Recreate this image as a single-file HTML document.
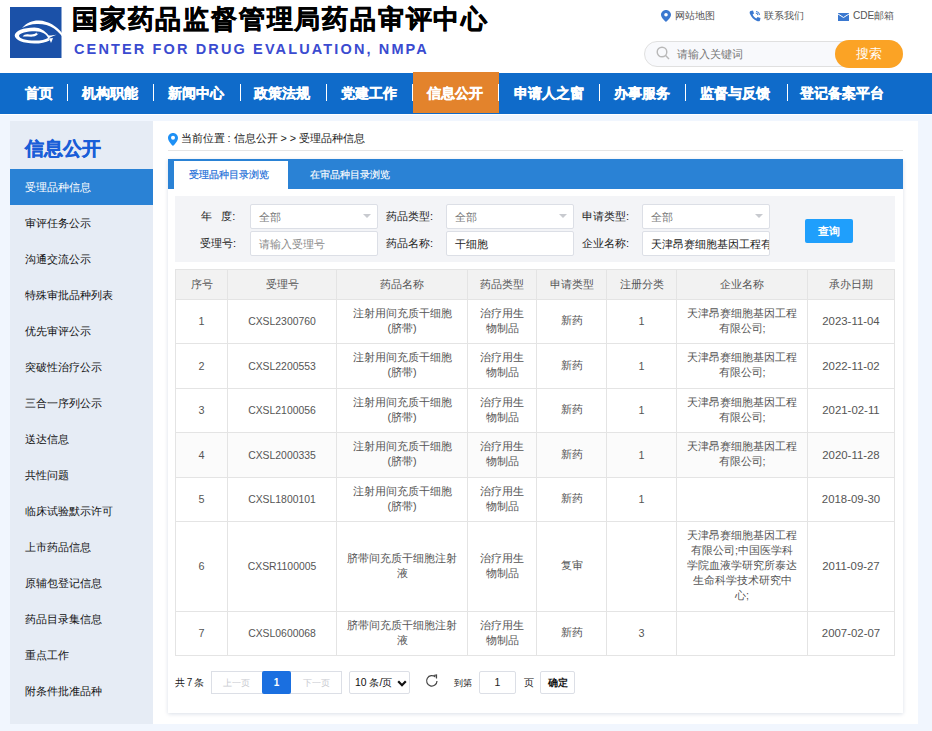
<!DOCTYPE html><html><head><meta charset="utf-8"><style>
*{margin:0;padding:0;box-sizing:border-box}
html,body{width:932px;height:731px;overflow:hidden;background:#fff;font-family:"Liberation Sans",sans-serif}
.a{position:absolute;white-space:nowrap}
.nav{color:#fff;font-weight:bold;font-size:14px;line-height:16px;-webkit-text-stroke:0.35px #fff}
.sep{position:absolute;top:84px;width:1px;height:17px;background:#fff}
.side{color:#222;font-size:10.6px;line-height:14px}
.cell{position:absolute;display:flex;align-items:center;justify-content:center;text-align:center;color:#555;font-size:10.8px;line-height:15px;padding-bottom:2px}
.hl{position:absolute;height:1px;background:#e4e4e4}
.vl{position:absolute;width:1px;background:#e4e4e4}
.lbl{color:#222;font-size:11px;line-height:14px}
.inp{position:absolute;background:#fff;border:1px solid #dcdfe6;border-radius:2px}
.ph{color:#7a7a7a;font-size:11px;line-height:14px}
.nocjk .c{font-size:110%;letter-spacing:0.159em;-webkit-text-stroke:0.06em}
.nocjk .tt .c{font-size:115%;letter-spacing:0.18em;-webkit-text-stroke:0.14em}
.nocjk .nav .c{-webkit-text-stroke:0.17em}
.nocjk .bd .c{-webkit-text-stroke:0.1em}

</style></head><body>
<div class="a" style="left:0;top:0;width:932px;height:73px;background:#fff"></div>
<svg class="a" style="left:10px;top:7px" width="60" height="52" viewBox="0 0 60 52">
<rect x="0" y="0" width="51.5" height="51" fill="#1b51a8"/>
<path d="M12 21 C17 15 23 13.2 29 13.4 C38 13.8 47 19 52 26 C54 29 55.5 32 56 35 C53 30 49 25 44 21.5 C39 18.2 33 16.8 27 17 C21 17.2 16 18.6 12 21 Z" fill="#fff"/>
<path fill-rule="evenodd" fill="#fff" d="M24.3 20.6 C13.5 20.6 4.7 24.2 4.7 28.6 C4.7 33 13.5 36.6 24.3 36.6 C30.5 36.6 36 35.4 39.6 33.4 C37 31.5 41 29.8 46.5 27.8 C42 28.2 39.5 29 38.5 28.2 C35 24 30 20.6 24.3 20.6 Z M25 24.2 C17 24.2 9 26 9 28.8 C9 31.6 16 33.6 25 33.6 C31 33.6 35.5 32.6 38 31 C37 27.5 32 24.2 25 24.2 Z"/>
<path d="M38.5 31.5 C40 33 40.5 34.5 41 36 C42 34 42.5 32 43 31 Z" fill="#fff"/>
<path d="M12.6 29.5 C14 27.5 16 27 19 27.4 C21 27.6 23 27.6 25 26.8 L26.5 25.6 L27 27 L28.6 26.2 C27.5 28.2 25.5 29.4 23 29.6 C19.5 29.8 15.5 29.2 12.6 29.5 Z" fill="#fff"/>
</svg>
<div class="a tt" style="left:72px;top:2px;font-size:26px;line-height:34px;font-weight:bold;color:#000;letter-spacing:1.8px;-webkit-text-stroke:0.5px #000"><span class="c">国家药品监督管理局药品审评中心</span></div>
<div class="a" style="left:74px;top:40px;font-size:14.5px;line-height:18px;font-weight:bold;color:#3a4bd0;letter-spacing:2.13px">CENTER FOR DRUG EVALUATION, NMPA</div>
<svg class="a" style="left:661px;top:10px" width="10" height="12" viewBox="0 0 10 12"><path d="M5 0 C2.2 0 0 2.2 0 4.8 C0 8 5 12 5 12 C5 12 10 8 10 4.8 C10 2.2 7.8 0 5 0 Z M5 3 A1.8 1.8 0 1 1 5 6.6 A1.8 1.8 0 1 1 5 3 Z" fill="#3a78d0" fill-rule="evenodd"/></svg>
<div class="a" style="left:675px;top:8.5px;font-size:10.1px;line-height:14px;color:#555"><span class="c">网站地图</span></div>
<svg class="a" style="left:749px;top:10px" width="12" height="12" viewBox="0 0 12 12"><path d="M1.5 1 L4 0.5 L5 3.5 L3.6 4.6 C4.3 6.4 5.6 7.7 7.4 8.4 L8.5 7 L11.5 8 L11 10.5 C10.5 11.5 9 11.5 8 11 C4.5 9.5 2.5 7.5 1 4 C0.5 3 0.5 1.5 1.5 1 Z" fill="#3a78d0"/><path d="M7 1.5 A3.5 3.5 0 0 1 10.5 5" stroke="#3a78d0" stroke-width="1" fill="none"/><path d="M6.8 3.2 A1.8 1.8 0 0 1 8.8 5.2" stroke="#3a78d0" stroke-width="1" fill="none"/></svg>
<div class="a" style="left:764px;top:8.5px;font-size:10.1px;line-height:14px;color:#555"><span class="c">联系我们</span></div>
<svg class="a" style="left:838px;top:13px" width="11" height="8" viewBox="0 0 11 8"><rect x="0" y="0" width="11" height="8" fill="#3a78d0"/><path d="M0 1 L5.5 4.5 L11 1" stroke="#fff" stroke-width="1" fill="none"/></svg>
<div class="a" style="left:853px;top:8.5px;font-size:10.1px;line-height:14px;color:#555">CDE<span class="c">邮箱</span></div>
<div class="a" style="left:644px;top:41px;width:230px;height:26px;border:1px solid #e0e0e0;border-radius:13px;background:#f8f9fc"></div>
<svg class="a" style="left:656px;top:46px" width="15" height="15" viewBox="0 0 15 15"><circle cx="6" cy="6" r="4.8" stroke="#b8b8b8" stroke-width="1.4" fill="none"/><path d="M9.6 9.6 L13 13" stroke="#b8b8b8" stroke-width="1.4"/></svg>
<div class="a" style="left:677px;top:47px;font-size:11.1px;line-height:15px;color:#777"><span class="c">请输入关键词</span></div>
<div class="a" style="left:835px;top:40px;width:68px;height:28px;border-radius:14px;background:#fba325;color:#fff;font-size:12.5px;line-height:28px;text-align:center"><span class="c">搜索</span></div>
<div class="a" style="left:0;top:73px;width:932px;height:41px;background:#0f6bca"></div>
<div class="a" style="left:413px;top:72px;width:86px;height:41px;background:#e3832c"></div>
<div class="a nav" style="left:24.5px;top:85px"><span class="c">首页</span></div>
<div class="a nav" style="left:81.5px;top:85px"><span class="c">机构职能</span></div>
<div class="a nav" style="left:168px;top:85px"><span class="c">新闻中心</span></div>
<div class="a nav" style="left:254px;top:85px"><span class="c">政策法规</span></div>
<div class="a nav" style="left:341px;top:85px"><span class="c">党建工作</span></div>
<div class="a nav" style="left:427px;top:85px"><span class="c">信息公开</span></div>
<div class="a nav" style="left:513.5px;top:85px"><span class="c">申请人之窗</span></div>
<div class="a nav" style="left:614px;top:85px"><span class="c">办事服务</span></div>
<div class="a nav" style="left:700px;top:85px"><span class="c">监督与反馈</span></div>
<div class="a nav" style="left:800px;top:85px"><span class="c">登记备案平台</span></div>
<div class="sep" style="left:67px"></div>
<div class="sep" style="left:153px"></div>
<div class="sep" style="left:240px"></div>
<div class="sep" style="left:326px"></div>
<div class="sep" style="left:412px"></div>
<div class="sep" style="left:498px"></div>
<div class="sep" style="left:599px"></div>
<div class="sep" style="left:685px"></div>
<div class="sep" style="left:787px"></div>
<div class="a" style="left:0;top:114px;width:932px;height:1px;background:#fff"></div>
<div class="a" style="left:0;top:115px;width:932px;height:616px;background:#f1f6fe"></div>
<div class="a" style="left:10px;top:121px;width:143px;height:603px;background:#e6ecf5"></div>
<div class="a bd" style="left:25px;top:138px;font-size:18.5px;line-height:22px;font-weight:bold;color:#1a5ed8;-webkit-text-stroke:0.4px #1a5ed8"><span class="c">信息公开</span></div>
<div class="a" style="left:10px;top:169px;width:143px;height:36px;background:#2a82d5"></div>
<div class="a side" style="left:25px;top:180px;color:#fff"><span class="c">受理品种信息</span></div>
<div class="a side" style="left:25px;top:216px;color:#111"><span class="c">审评任务公示</span></div>
<div class="a side" style="left:25px;top:252px;color:#111"><span class="c">沟通交流公示</span></div>
<div class="a side" style="left:25px;top:288px;color:#111"><span class="c">特殊审批品种列表</span></div>
<div class="a side" style="left:25px;top:324px;color:#111"><span class="c">优先审评公示</span></div>
<div class="a side" style="left:25px;top:360px;color:#111"><span class="c">突破性治疗公示</span></div>
<div class="a side" style="left:25px;top:396px;color:#111"><span class="c">三合一序列公示</span></div>
<div class="a side" style="left:25px;top:432px;color:#111"><span class="c">送达信息</span></div>
<div class="a side" style="left:25px;top:468px;color:#111"><span class="c">共性问题</span></div>
<div class="a side" style="left:25px;top:504px;color:#111"><span class="c">临床试验默示许可</span></div>
<div class="a side" style="left:25px;top:540px;color:#111"><span class="c">上市药品信息</span></div>
<div class="a side" style="left:25px;top:576px;color:#111"><span class="c">原辅包登记信息</span></div>
<div class="a side" style="left:25px;top:612px;color:#111"><span class="c">药品目录集信息</span></div>
<div class="a side" style="left:25px;top:648px;color:#111"><span class="c">重点工作</span></div>
<div class="a side" style="left:25px;top:684px;color:#111"><span class="c">附条件批准品种</span></div>
<div class="a" style="left:153px;top:121px;width:765px;height:603px;background:#fff"></div>
<svg class="a" style="left:168px;top:133px" width="10" height="13" viewBox="0 0 10 13"><path d="M5 0 C2.2 0 0 2.2 0 5 C0 8.5 5 13 5 13 C5 13 10 8.5 10 5 C10 2.2 7.8 0 5 0 Z M5 2.8 A2 2 0 1 1 5 6.8 A2 2 0 1 1 5 2.8 Z" fill="#1e90f5" fill-rule="evenodd"/></svg>
<div class="a" style="left:180.5px;top:131px;font-size:10.8px;line-height:14px;color:#222"><span class="c">当前位置</span> : <span class="c">信息公开</span> &gt; &gt; <span class="c">受理品种信息</span></div>
<div class="a" style="left:168px;top:150px;width:735px;height:1px;background:#e5e5e5"></div>
<div class="a" style="left:168px;top:159px;width:735px;height:554px;background:#fff;box-shadow:0 1px 4px rgba(0,40,100,0.15)"></div>
<div class="a" style="left:168px;top:159px;width:735px;height:30px;background:#2a82d5"></div>
<div class="a" style="left:174px;top:161px;width:114px;height:28px;background:#fff"></div>
<div class="a" style="left:188.5px;top:168px;font-size:10.1px;line-height:14px;color:#1f70d8;-webkit-text-stroke:0.2px #1f70d8"><span class="c">受理品种目录浏览</span></div>
<div class="a" style="left:309.5px;top:168px;font-size:10.1px;line-height:14px;color:#fff;-webkit-text-stroke:0.15px #fff"><span class="c">在审品种目录浏览</span></div>
<div class="a" style="left:175px;top:196px;width:720px;height:66px;background:#f3f4f7"></div>
<div class="a lbl" style="left:201px;top:209px"><span class="c">年</span>&nbsp;&nbsp;&nbsp;<span class="c">度</span>:</div>
<div class="a lbl" style="left:200px;top:236px"><span class="c">受理号</span>:</div>
<div class="a lbl" style="left:386px;top:209px"><span class="c">药品类型</span>:</div>
<div class="a lbl" style="left:386px;top:236px"><span class="c">药品名称</span>:</div>
<div class="a lbl" style="left:582px;top:209px"><span class="c">申请类型</span>:</div>
<div class="a lbl" style="left:582px;top:236px"><span class="c">企业名称</span>:</div>
<div class="inp" style="left:250.0px;top:204px;width:128px;height:24.5px"></div>
<div class="a ph" style="left:258.5px;top:209.5px"><span class="c">全部</span></div>
<svg class="a" style="left:363.0px;top:214px" width="8" height="4" viewBox="0 0 8 4"><path d="M0 0 L8 0 L4 4 Z" fill="#c8cacf"/></svg>
<div class="inp" style="left:250.0px;top:231px;width:128px;height:24.5px"></div>
<div class="inp" style="left:446.0px;top:204px;width:128px;height:24.5px"></div>
<div class="a ph" style="left:454.5px;top:209.5px"><span class="c">全部</span></div>
<svg class="a" style="left:559.0px;top:214px" width="8" height="4" viewBox="0 0 8 4"><path d="M0 0 L8 0 L4 4 Z" fill="#c8cacf"/></svg>
<div class="inp" style="left:446.0px;top:231px;width:128px;height:24.5px"></div>
<div class="inp" style="left:642.0px;top:204px;width:128px;height:24.5px"></div>
<div class="a ph" style="left:650.5px;top:209.5px"><span class="c">全部</span></div>
<svg class="a" style="left:755.0px;top:214px" width="8" height="4" viewBox="0 0 8 4"><path d="M0 0 L8 0 L4 4 Z" fill="#c8cacf"/></svg>
<div class="inp" style="left:642.0px;top:231px;width:128px;height:24.5px"></div>
<div class="a ph" style="left:258.5px;top:236.5px;color:#8a8a8a"><span class="c">请输入受理号</span></div>
<div class="a lbl" style="left:454.5px;top:236.5px"><span class="c">干细胞</span></div>
<div class="a lbl" style="left:650.5px;top:236.5px;width:118px;overflow:hidden"><span class="c">天津昂赛细胞基因工程有限公司</span></div>
<div class="a bd" style="left:805px;top:219px;width:48px;height:24px;background:#1f9ffc;border-radius:2px;color:#fff;font-size:11px;line-height:24px;text-align:center;font-weight:bold"><span class="c">查询</span></div>
<div class="a" style="left:175px;top:269px;width:720px;height:31px;background:#f2f2f2"></div>
<div class="a" style="left:176px;top:433px;width:718px;height:44px;background:#fbfbfb"></div>
<div class="hl" style="left:175px;top:269px;width:720px"></div>
<div class="hl" style="left:175px;top:299px;width:720px"></div>
<div class="hl" style="left:175px;top:343px;width:720px"></div>
<div class="hl" style="left:175px;top:388px;width:720px"></div>
<div class="hl" style="left:175px;top:432px;width:720px"></div>
<div class="hl" style="left:175px;top:477px;width:720px"></div>
<div class="hl" style="left:175px;top:521px;width:720px"></div>
<div class="hl" style="left:175px;top:611px;width:720px"></div>
<div class="hl" style="left:175px;top:655px;width:720px"></div>
<div class="vl" style="left:175px;top:269px;height:387px"></div>
<div class="vl" style="left:227px;top:269px;height:387px"></div>
<div class="vl" style="left:336px;top:269px;height:387px"></div>
<div class="vl" style="left:467px;top:269px;height:387px"></div>
<div class="vl" style="left:536px;top:269px;height:387px"></div>
<div class="vl" style="left:606px;top:269px;height:387px"></div>
<div class="vl" style="left:676px;top:269px;height:387px"></div>
<div class="vl" style="left:807px;top:269px;height:387px"></div>
<div class="vl" style="left:894px;top:269px;height:387px"></div>
<div class="cell" style="left:176px;top:270px;width:51px;height:29px;padding-bottom:0"><div><span class="c">序号</span></div></div>
<div class="cell" style="left:228px;top:270px;width:108px;height:29px;padding-bottom:0"><div><span class="c">受理号</span></div></div>
<div class="cell" style="left:337px;top:270px;width:130px;height:29px;padding-bottom:0"><div><span class="c">药品名称</span></div></div>
<div class="cell" style="left:468px;top:270px;width:68px;height:29px;padding-bottom:0"><div><span class="c">药品类型</span></div></div>
<div class="cell" style="left:537px;top:270px;width:69px;height:29px;padding-bottom:0"><div><span class="c">申请类型</span></div></div>
<div class="cell" style="left:607px;top:270px;width:69px;height:29px;padding-bottom:0"><div><span class="c">注册分类</span></div></div>
<div class="cell" style="left:677px;top:270px;width:130px;height:29px;padding-bottom:0"><div><span class="c">企业名称</span></div></div>
<div class="cell" style="left:808px;top:270px;width:86px;height:29px;padding-bottom:0"><div><span class="c">承办日期</span></div></div>
<div class="cell" style="left:176px;top:300px;width:51px;height:43px;"><div><span style="position:relative;top:1px">1</span></div></div>
<div class="cell" style="left:228px;top:300px;width:108px;height:43px;"><div><span style="font-size:10.4px;position:relative;top:1px">CXSL2300760</span></div></div>
<div class="cell" style="left:337px;top:300px;width:130px;height:43px;"><div><span class="c">注射用间充质干细胞</span><br>(<span class="c">脐带</span>)</div></div>
<div class="cell" style="left:468px;top:300px;width:68px;height:43px;"><div><span class="c">治疗用生</span><br><span class="c">物制品</span></div></div>
<div class="cell" style="left:537px;top:300px;width:69px;height:43px;"><div><span class="c">新药</span></div></div>
<div class="cell" style="left:607px;top:300px;width:69px;height:43px;"><div><span style="position:relative;top:1px">1</span></div></div>
<div class="cell" style="left:677px;top:300px;width:130px;height:43px;"><div><span class="c">天津昂赛细胞基因工程</span><br><span class="c">有限公司</span>;</div></div>
<div class="cell" style="left:808px;top:300px;width:86px;height:43px;"><div><span style="font-size:11.4px;position:relative;top:1px">2023-11-04</span></div></div>
<div class="cell" style="left:176px;top:344px;width:51px;height:44px;"><div><span style="position:relative;top:1px">2</span></div></div>
<div class="cell" style="left:228px;top:344px;width:108px;height:44px;"><div><span style="font-size:10.4px;position:relative;top:1px">CXSL2200553</span></div></div>
<div class="cell" style="left:337px;top:344px;width:130px;height:44px;"><div><span class="c">注射用间充质干细胞</span><br>(<span class="c">脐带</span>)</div></div>
<div class="cell" style="left:468px;top:344px;width:68px;height:44px;"><div><span class="c">治疗用生</span><br><span class="c">物制品</span></div></div>
<div class="cell" style="left:537px;top:344px;width:69px;height:44px;"><div><span class="c">新药</span></div></div>
<div class="cell" style="left:607px;top:344px;width:69px;height:44px;"><div><span style="position:relative;top:1px">1</span></div></div>
<div class="cell" style="left:677px;top:344px;width:130px;height:44px;"><div><span class="c">天津昂赛细胞基因工程</span><br><span class="c">有限公司</span>;</div></div>
<div class="cell" style="left:808px;top:344px;width:86px;height:44px;"><div><span style="font-size:11.4px;position:relative;top:1px">2022-11-02</span></div></div>
<div class="cell" style="left:176px;top:389px;width:51px;height:43px;"><div><span style="position:relative;top:1px">3</span></div></div>
<div class="cell" style="left:228px;top:389px;width:108px;height:43px;"><div><span style="font-size:10.4px;position:relative;top:1px">CXSL2100056</span></div></div>
<div class="cell" style="left:337px;top:389px;width:130px;height:43px;"><div><span class="c">注射用间充质干细胞</span><br>(<span class="c">脐带</span>)</div></div>
<div class="cell" style="left:468px;top:389px;width:68px;height:43px;"><div><span class="c">治疗用生</span><br><span class="c">物制品</span></div></div>
<div class="cell" style="left:537px;top:389px;width:69px;height:43px;"><div><span class="c">新药</span></div></div>
<div class="cell" style="left:607px;top:389px;width:69px;height:43px;"><div><span style="position:relative;top:1px">1</span></div></div>
<div class="cell" style="left:677px;top:389px;width:130px;height:43px;"><div><span class="c">天津昂赛细胞基因工程</span><br><span class="c">有限公司</span>;</div></div>
<div class="cell" style="left:808px;top:389px;width:86px;height:43px;"><div><span style="font-size:11.4px;position:relative;top:1px">2021-02-11</span></div></div>
<div class="cell" style="left:176px;top:433px;width:51px;height:44px;"><div><span style="position:relative;top:1px">4</span></div></div>
<div class="cell" style="left:228px;top:433px;width:108px;height:44px;"><div><span style="font-size:10.4px;position:relative;top:1px">CXSL2000335</span></div></div>
<div class="cell" style="left:337px;top:433px;width:130px;height:44px;"><div><span class="c">注射用间充质干细胞</span><br>(<span class="c">脐带</span>)</div></div>
<div class="cell" style="left:468px;top:433px;width:68px;height:44px;"><div><span class="c">治疗用生</span><br><span class="c">物制品</span></div></div>
<div class="cell" style="left:537px;top:433px;width:69px;height:44px;"><div><span class="c">新药</span></div></div>
<div class="cell" style="left:607px;top:433px;width:69px;height:44px;"><div><span style="position:relative;top:1px">1</span></div></div>
<div class="cell" style="left:677px;top:433px;width:130px;height:44px;"><div><span class="c">天津昂赛细胞基因工程</span><br><span class="c">有限公司</span>;</div></div>
<div class="cell" style="left:808px;top:433px;width:86px;height:44px;"><div><span style="font-size:11.4px;position:relative;top:1px">2020-11-28</span></div></div>
<div class="cell" style="left:176px;top:478px;width:51px;height:43px;"><div><span style="position:relative;top:1px">5</span></div></div>
<div class="cell" style="left:228px;top:478px;width:108px;height:43px;"><div><span style="font-size:10.4px;position:relative;top:1px">CXSL1800101</span></div></div>
<div class="cell" style="left:337px;top:478px;width:130px;height:43px;"><div><span class="c">注射用间充质干细胞</span><br>(<span class="c">脐带</span>)</div></div>
<div class="cell" style="left:468px;top:478px;width:68px;height:43px;"><div><span class="c">治疗用生</span><br><span class="c">物制品</span></div></div>
<div class="cell" style="left:537px;top:478px;width:69px;height:43px;"><div><span class="c">新药</span></div></div>
<div class="cell" style="left:607px;top:478px;width:69px;height:43px;"><div><span style="position:relative;top:1px">1</span></div></div>
<div class="cell" style="left:677px;top:478px;width:130px;height:43px;"><div></div></div>
<div class="cell" style="left:808px;top:478px;width:86px;height:43px;"><div><span style="font-size:11.4px;position:relative;top:1px">2018-09-30</span></div></div>
<div class="cell" style="left:176px;top:522px;width:51px;height:89px;"><div><span style="position:relative;top:1px">6</span></div></div>
<div class="cell" style="left:228px;top:522px;width:108px;height:89px;"><div><span style="font-size:10.4px;position:relative;top:1px">CXSR1100005</span></div></div>
<div class="cell" style="left:337px;top:522px;width:130px;height:89px;"><div><span class="c">脐带间充质干细胞注射</span><br><span class="c">液</span></div></div>
<div class="cell" style="left:468px;top:522px;width:68px;height:89px;"><div><span class="c">治疗用生</span><br><span class="c">物制品</span></div></div>
<div class="cell" style="left:537px;top:522px;width:69px;height:89px;"><div><span class="c">复审</span></div></div>
<div class="cell" style="left:607px;top:522px;width:69px;height:89px;"><div><span style="position:relative;top:1px"></span></div></div>
<div class="cell" style="left:677px;top:522px;width:130px;height:89px;"><div><span class="c">天津昂赛细胞基因工程</span><br><span class="c">有限公司</span>;<span class="c">中国医学科</span><br><span class="c">学院血液学研究所泰达</span><br><span class="c">生命科学技术研究中</span><br><span class="c">心</span>;</div></div>
<div class="cell" style="left:808px;top:522px;width:86px;height:89px;"><div><span style="font-size:11.4px;position:relative;top:1px">2011-09-27</span></div></div>
<div class="cell" style="left:176px;top:612px;width:51px;height:43px;"><div><span style="position:relative;top:1px">7</span></div></div>
<div class="cell" style="left:228px;top:612px;width:108px;height:43px;"><div><span style="font-size:10.4px;position:relative;top:1px">CXSL0600068</span></div></div>
<div class="cell" style="left:337px;top:612px;width:130px;height:43px;"><div><span class="c">脐带间充质干细胞注射</span><br><span class="c">液</span></div></div>
<div class="cell" style="left:468px;top:612px;width:68px;height:43px;"><div><span class="c">治疗用生</span><br><span class="c">物制品</span></div></div>
<div class="cell" style="left:537px;top:612px;width:69px;height:43px;"><div><span class="c">新药</span></div></div>
<div class="cell" style="left:607px;top:612px;width:69px;height:43px;"><div><span style="position:relative;top:1px">3</span></div></div>
<div class="cell" style="left:677px;top:612px;width:130px;height:43px;"><div></div></div>
<div class="cell" style="left:808px;top:612px;width:86px;height:43px;"><div><span style="font-size:11.4px;position:relative;top:1px">2007-02-07</span></div></div>
<div class="a" style="left:174.5px;top:675.5px;font-size:10px;line-height:14px;color:#222;letter-spacing:-0.3px"><span class="c">共</span> 7 <span class="c">条</span></div>
<div class="a" style="left:211px;top:671px;width:131px;height:23px;border:1px solid #dcdfe6"></div>
<div class="a" style="left:262px;top:671px;width:29px;height:23px;background:#1a6fe0;border-radius:2px;color:#fff;font-size:10px;line-height:23px;text-align:center;font-weight:bold">1</div>
<div class="a" style="left:211px;top:676px;width:51px;text-align:center;font-size:9.3px;line-height:14px;color:#c8cad0"><span class="c">上一页</span></div>
<div class="a" style="left:291px;top:676px;width:51px;text-align:center;font-size:9.3px;line-height:14px;color:#c8cad0"><span class="c">下一页</span></div>
<div class="a" style="left:349px;top:671px;width:61px;height:23px;border:1px solid #dcdfe6;border-radius:2px"></div>
<div class="a" style="left:355px;top:676px;font-size:10.4px;line-height:14px;color:#111">10 <span class="c">条</span>/<span class="c">页</span></div>
<svg class="a" style="left:397px;top:679.5px" width="10" height="7" viewBox="0 0 10 7"><path d="M1.2 1.2 L5 5.2 L8.8 1.2" stroke="#111" stroke-width="2.2" fill="none"/></svg>
<svg class="a" style="left:425px;top:674px" width="14" height="14" viewBox="0 0 14 14"><path d="M12 7 A5.2 5.2 0 1 1 10.5 3.2" stroke="#444" stroke-width="1.2" fill="none"/><path d="M8.5 1.5 L11.5 1 L11.5 4.5" stroke="#444" stroke-width="1.2" fill="none"/></svg>
<div class="a" style="left:453.5px;top:676px;font-size:9.2px;line-height:14px;color:#222"><span class="c">到第</span></div>
<div class="a" style="left:479px;top:671px;width:37px;height:23px;border:1px solid #dcdfe6;border-radius:2px;font-size:10.5px;line-height:21px;text-align:center;color:#222">1</div>
<div class="a" style="left:523.5px;top:676px;font-size:10px;line-height:14px;color:#222"><span class="c">页</span></div>
<div class="a" style="left:540px;top:671px;width:35px;height:23px;border:1px solid #dcdfe6;border-radius:2px;font-size:9.5px;line-height:22px;text-align:center;color:#111;font-weight:bold"><span class="c">确定</span></div>
<script>
(function(){
  var t=document.createElement('span');
  t.style.cssText='position:absolute;left:-9999px;top:0;visibility:hidden;white-space:nowrap;font-size:100px;font-family:"Liberation Sans",sans-serif';
  t.textContent='\u56fd\u56fd\u56fd\u56fd';
  document.body.appendChild(t);
  var w=t.getBoundingClientRect().width;
  document.body.removeChild(t);
  if(w<360){document.documentElement.className+=' nocjk';}
})();
</script>
</body></html>
